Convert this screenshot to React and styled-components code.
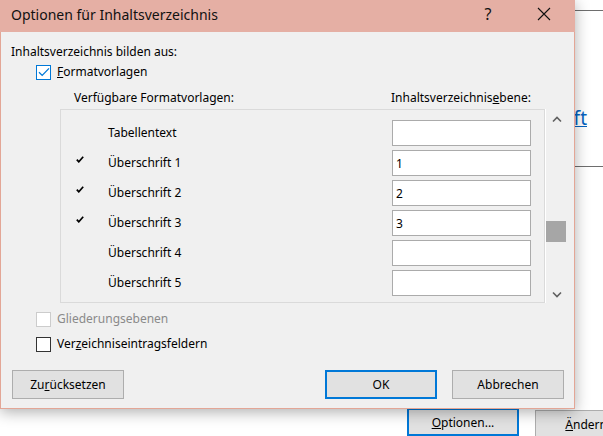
import React from "react";
import styled, { createGlobalStyle } from "styled-components";

const GlobalStyle = createGlobalStyle`
  html, body {
    margin: 0;
    padding: 0;
    background: #ffffff;
    font-family: "Noto Sans", "Open Sans", sans-serif;
  }
  * { box-sizing: border-box; }
`;

const styles = [
  { name: "Tabellentext", checked: false, level: "" },
  { name: "Überschrift 1", checked: true, level: "1" },
  { name: "Überschrift 2", checked: true, level: "2" },
  { name: "Überschrift 3", checked: true, level: "3" },
  { name: "Überschrift 4", checked: false, level: "" },
  { name: "Überschrift 5", checked: false, level: "" },
];

const CheckGlyph = ({ color = "#0078d7" }) => (
  <svg width="12" height="10" viewBox="0 0 12 10">
    <path d="M1 5.2 L4.2 8.4 L11 1.4" fill="none" stroke={color} strokeWidth="1.3" />
  </svg>
);

const TickMark = () => (
  <svg width="8" height="7" viewBox="0 0 8 7">
    <path d="M0.8 3.6 L2.8 5.8 L7.2 0.8" fill="none" stroke="#000" strokeWidth="1.7" />
  </svg>
);

const Chevron = ({ down }) => (
  <svg width="10" height="7" viewBox="0 0 10 7">
    <path
      d={down ? "M1 1.5 L5 5.5 L9 1.5" : "M1 5.5 L5 1.5 L9 5.5"}
      fill="none"
      stroke="#606060"
      strokeWidth="1.6"
    />
  </svg>
);

const App = () => {
  return (
    <>
      <GlobalStyle />
      <Desktop>
        <Document>
          <Rule />
          <LinkRow>
            <DocLink href="#">Überschrift</DocLink>
          </LinkRow>
          <Rule />
          <DocButtons>
            <DocButton primary>
              <u>O</u>ptionen...
            </DocButton>
            <DocButton>
              <u>Ä</u>ndern...
            </DocButton>
          </DocButtons>
        </Document>

        <Dialog>
          <TitleBar>
            <Title>Optionen für Inhaltsverzeichnis</Title>
            <TitleButton>?</TitleButton>
            <TitleButton close>
              <svg width="14" height="14" viewBox="0 0 14 14">
                <path d="M1 1 L13 13 M13 1 L1 13" stroke="#111" strokeWidth="1.1" />
              </svg>
            </TitleButton>
          </TitleBar>

          <Body>
            <Label>Inhaltsverzeichnis bilden aus:</Label>
            <CheckRow indent={25}>
              <Box checked>
                <CheckGlyph />
              </Box>
              <span>
                <u>F</u>ormatvorlagen
              </span>
            </CheckRow>

            <ColumnHeads>
              <span>Verfügbare Formatvorlagen:</span>
              <span>
                Inhaltsverzeichnis<u>e</u>bene:
              </span>
            </ColumnHeads>

            <ListFrame>
              <StyleList>
                {styles.map((s) => (
                  <StyleRow key={s.name}>
                    <TickCell>{s.checked && <TickMark />}</TickCell>
                    <StyleName>{s.name}</StyleName>
                    <LevelInput readOnly value={s.level} />
                  </StyleRow>
                ))}
              </StyleList>
              <ScrollBar>
                <Chevron />
                <Track>
                  <Thumb />
                </Track>
                <Chevron down />
              </ScrollBar>
            </ListFrame>

            <CheckRow indent={25} top={8} disabled>
              <Box disabled />
              <span>Gliederungsebenen</span>
            </CheckRow>
            <CheckRow indent={25} top={9}>
              <Box />
              <span>
                Ver<u>z</u>eichniseintragsfeldern
              </span>
            </CheckRow>

            <Footer>
              <Button>
                Zu<u>r</u>ücksetzen
              </Button>
              <Spacer />
              <Button primary>OK</Button>
              <Button>Abbrechen</Button>
            </Footer>
          </Body>
        </Dialog>
      </Desktop>
    </>
  );
};

const Desktop = styled.div`
  position: relative;
  width: 603px;
  height: 436px;
  overflow: hidden;
  background: #ffffff;
`;

const Document = styled.div`
  padding-top: 10px;
  display: flex;
  flex-direction: column;
`;

const Rule = styled.div`
  height: 1px;
  background: #6e6e6e;
  margin-left: 560px;
`;

const LinkRow = styled.div`
  height: 155px;
  display: flex;
  justify-content: flex-end;
  align-items: flex-start;
  padding: 94px 16px 0 0;
`;

const DocLink = styled.a`
  font-family: "Noto Sans", sans-serif;
  font-size: 19px;
  color: #0563c1;
  text-decoration: underline;
  line-height: 26px;
`;

const DocButtons = styled.div`
  display: flex;
  gap: 16px;
  padding: 241px 0 0 407px;
  align-items: flex-start;
`;

const DocButton = styled.button`
  width: 112px;
  height: 28px;
  flex-shrink: 0;
  font-family: "Noto Sans", sans-serif;
  font-size: 12px;
  color: #000;
  background: #e1e1e1;
  border: ${(p) => (p.primary ? "2px solid #0078d7" : "1px solid #adadad")};
  margin-top: ${(p) => (p.primary ? "0" : "2px")};
  padding: 0;
  white-space: nowrap;
`;

const Dialog = styled.div`
  position: absolute;
  left: 0;
  top: 0;
  width: 575px;
  height: 409px;
  background: #f0f0f0;
  border: 1px solid #e3a696;
  box-shadow: 0 3px 14px rgba(0, 0, 0, 0.32);
  display: flex;
  flex-direction: column;
  font-family: "Noto Sans", sans-serif;
  font-size: 12px;
  color: #000;
`;

const TitleBar = styled.div`
  height: 32px;
  margin: -1px -1px 0 -1px;
  background: #e5afa4;
  display: flex;
  align-items: center;
  padding: 0 0 4px 11px;
`;

const Title = styled.div`
  flex: 1;
  font-size: 14px;
  color: #111;
`;

const TitleButton = styled.div`
  width: ${(p) => (p.close ? "58px" : "46px")};
  height: 28px;
  display: flex;
  align-items: center;
  justify-content: center;
  font-size: 16px;
  color: #111;
  margin-right: ${(p) => (p.close ? "2px" : "4px")};
`;

const Body = styled.div`
  flex: 1;
  display: flex;
  flex-direction: column;
  padding: 12px 10px 0 10px;
`;

const Label = styled.div`
  line-height: 16px;
`;

const CheckRow = styled.label`
  display: flex;
  align-items: center;
  gap: 6px;
  padding-left: ${(p) => p.indent}px;
  margin-top: ${(p) => (p.top ? p.top : 4)}px;
  line-height: 16px;
  color: ${(p) => (p.disabled ? "#8a8a8a" : "#000")};
`;

const Box = styled.span`
  width: 15px;
  height: 15px;
  display: inline-flex;
  align-items: center;
  justify-content: center;
  background: #ffffff;
  border: 1px solid
    ${(p) => (p.checked ? "#0078d7" : p.disabled ? "#cccccc" : "#333333")};
`;

const ColumnHeads = styled.div`
  display: grid;
  grid-template-columns: 317px 1fr;
  padding-left: 63px;
  margin-top: 10px;
  line-height: 16px;
`;

const ListFrame = styled.div`
  display: flex;
  margin: 3px 0 0 49px;
  height: 194px;
  width: 507px;
`;

const StyleList = styled.div`
  width: 485px;
  border: 1px solid #dadada;
  padding-top: 8px;
  display: flex;
  flex-direction: column;
`;

const StyleRow = styled.div`
  height: 30px;
  display: grid;
  grid-template-columns: 47px 284px 139px;
  align-items: center;
`;

const TickCell = styled.div`
  padding-left: 15px;
  display: flex;
  align-items: center;
  margin-top: -8px;
`;

const StyleName = styled.div`
  line-height: 16px;
`;

const LevelInput = styled.input`
  height: 26px;
  width: 139px;
  border: 1px solid #ababab;
  background: #ffffff;
  font-family: "Noto Sans", sans-serif;
  font-size: 12px;
  padding: 0 3px;
  outline: none;
`;

const ScrollBar = styled.div`
  width: 22px;
  border-left: 1px solid #ffffff;
  display: flex;
  flex-direction: column;
  align-items: center;
  padding: 7px 0 5px 0;
`;

const Track = styled.div`
  flex: 1;
  width: 100%;
  position: relative;
`;

const Thumb = styled.div`
  position: absolute;
  left: 0;
  top: 98px;
  width: 20px;
  height: 21px;
  background: #a6a6a6;
`;

const Footer = styled.div`
  display: flex;
  align-items: center;
  gap: 15px;
  margin-top: 18px;
  padding-left: 1px;
`;

const Spacer = styled.div`
  flex: 1;
`;

const Button = styled.button`
  width: 112px;
  height: 29px;
  flex-shrink: 0;
  font-family: "Noto Sans", sans-serif;
  font-size: 12px;
  color: #000;
  background: #e1e1e1;
  border: ${(p) => (p.primary ? "2px solid #0078d7" : "1px solid #adadad")};
  padding: 0;
`;

export default App;
